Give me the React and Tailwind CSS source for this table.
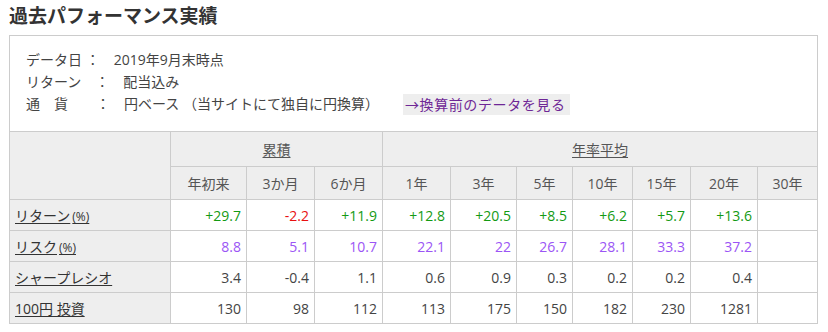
const cols = [
  "w-[161px]",
  "w-[76px]",
  "w-[68px]",
  "w-[68px]",
  "w-[68px]",
  "w-[66px]",
  "w-[56px]",
  "w-[60px]",
  "w-[58px]",
  "w-[67px]",
  "w-[60px]",
];

const periods = ["年初来", "3か月", "6か月", "1年", "3年", "5年", "10年", "15年", "20年", "30年"];

const rows = [
  {
    label: "リターン",
    unit: "(%)",
    color: "signed",
    values: ["+29.7", "-2.2", "+11.9", "+12.8", "+20.5", "+8.5", "+6.2", "+5.7", "+13.6", ""],
  },
  {
    label: "リスク",
    unit: "(%)",
    color: "text-[#9b55f5]",
    values: ["8.8", "5.1", "10.7", "22.1", "22", "26.7", "28.1", "33.3", "37.2", ""],
  },
  {
    label: "シャープレシオ",
    color: "text-[#444]",
    values: ["3.4", "-0.4", "1.1", "0.6", "0.9", "0.3", "0.2", "0.2", "0.4", ""],
  },
  {
    label: "100円 投資",
    color: "text-[#444]",
    values: ["130", "98", "112", "113", "175", "150", "182", "230", "1281", ""],
  },
];

const valueColor = (row, v) => {
  if (row.color !== "signed") return row.color;
  return v.startsWith("-") ? "text-[#e81010]" : "text-[#139a13]";
};

export default function App() {
  return (
    <div
      className="w-[828px] h-[332px] bg-white pl-[9px] pr-[10px] text-[#333] text-[14px]"
      style={{ fontFamily: '"Open Sans", "Noto Sans CJK JP", sans-serif' }}
    >
      <h2 className="h-[35px] pt-[3px] text-[19px] font-bold leading-[26px] text-[#333]">
        過去パフォーマンス実績
      </h2>

      {/* data info */}
      <div className="h-[96px] border-x border-t border-[#cccccc] pl-[16px] pt-[13px] leading-[22px] text-[#444]">
        <div>データ日 ：　2019年9月末時点</div>
        <div>リターン　：　配当込み</div>
        <div className="flex items-center">
          <span>通　貨　　：　円ベース （当サイトにて独自に円換算）</span>
          <a href="#" className="ml-[24px] bg-[#eeeeee] pl-[2px] pr-[4px] leading-[21px] tracking-[0.6px] text-[#6e2796]">
            →換算前のデータを見る
          </a>
        </div>
      </div>

      <table className="w-[809px] table-fixed border-collapse text-[14px]">
        <colgroup>
          {cols.map((c, i) => (
            <col key={i} className={c} />
          ))}
        </colgroup>
        <thead className="bg-[#eeeeee] text-[#555] font-normal">
          <tr className="h-[35px]">
            <th rowSpan={2} className="border border-[#cccccc] font-normal"></th>
            <th colSpan={3} className="border border-[#cccccc] font-normal">
              <span className="underline underline-offset-2">累積</span>
            </th>
            <th colSpan={7} className="border border-[#cccccc] font-normal">
              <span className="underline underline-offset-2">年率平均</span>
            </th>
          </tr>
          <tr className="h-[33px]">
            {periods.map((p) => (
              <th key={p} className="border border-[#cccccc] font-normal">
                {p}
              </th>
            ))}
          </tr>
        </thead>
        <tbody>
          {rows.map((row) => (
            <tr key={row.label} className="h-[31px]">
              <td className="border border-[#cccccc] bg-[#eeeeee] pl-[5px] text-[#333]">
                <a href="#" className="underline underline-offset-2">
                  {row.label}
                  {row.unit && <span className="ml-[2px] text-[12px]">{row.unit}</span>}
                </a>
              </td>
              {row.values.map((v, i) => (
                <td key={i} className={`border border-[#cccccc] pr-[5px] text-right ${valueColor(row, v)}`}>
                  {v}
                </td>
              ))}
            </tr>
          ))}
        </tbody>
      </table>
    </div>
  );
}
